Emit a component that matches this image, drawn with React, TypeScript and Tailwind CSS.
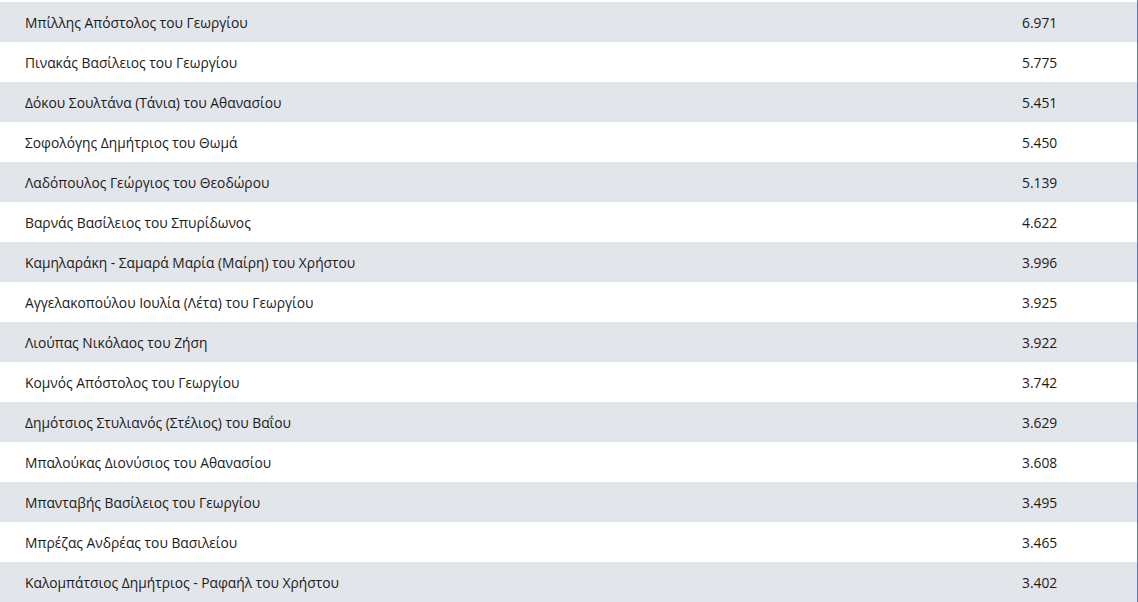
import React from "react";

const rows: [string, string][] = [
  ["Μπίλλης Απόστολος του Γεωργίου", "6.971"],
  ["Πινακάς Βασίλειος του Γεωργίου", "5.775"],
  ["Δόκου Σουλτάνα (Τάνια) του Αθανασίου", "5.451"],
  ["Σοφολόγης Δημήτριος του Θωμά", "5.450"],
  ["Λαδόπουλος Γεώργιος του Θεοδώρου", "5.139"],
  ["Βαρνάς Βασίλειος του Σπυρίδωνος", "4.622"],
  ["Καμηλαράκη - Σαμαρά Μαρία (Μαίρη) του Χρήστου", "3.996"],
  ["Αγγελακοπούλου Ιουλία (Λέτα) του Γεωργίου", "3.925"],
  ["Λιούπας Νικόλαος του Ζήση", "3.922"],
  ["Κομνός Απόστολος του Γεωργίου", "3.742"],
  ["Δημότσιος Στυλιανός (Στέλιος) του Βαΐου", "3.629"],
  ["Μπαλούκας Διονύσιος του Αθανασίου", "3.608"],
  ["Μπανταβής Βασίλειος του Γεωργίου", "3.495"],
  ["Μπρέζας Ανδρέας του Βασιλείου", "3.465"],
  ["Καλομπάτσιος Δημήτριος - Ραφαήλ του Χρήστου", "3.402"],
];

export default function App() {
  return (
    <div
      className="w-[1138px] h-[602px] overflow-hidden bg-white flex"
      style={{ fontFamily: '"Open Sans", "Noto Sans", sans-serif' }}
    >
      <div className="flex-1 pt-[2px]">
        {rows.map(([name, v], i) => (
          <div
            key={i}
            className={`h-[40px] pt-[2px] flex items-center text-[13.8px] text-[#1b1b1b] ${
              i % 2 === 0 ? "bg-[#e2e5e9]" : "bg-white"
            }`}
          >
            <div className="flex-1 pl-[25px]">{name}</div>
            <div className="w-[115px]">{v}</div>
          </div>
        ))}
      </div>
      <div className="w-[1px] bg-[#4a7fd0]" />
    </div>
  );
}
